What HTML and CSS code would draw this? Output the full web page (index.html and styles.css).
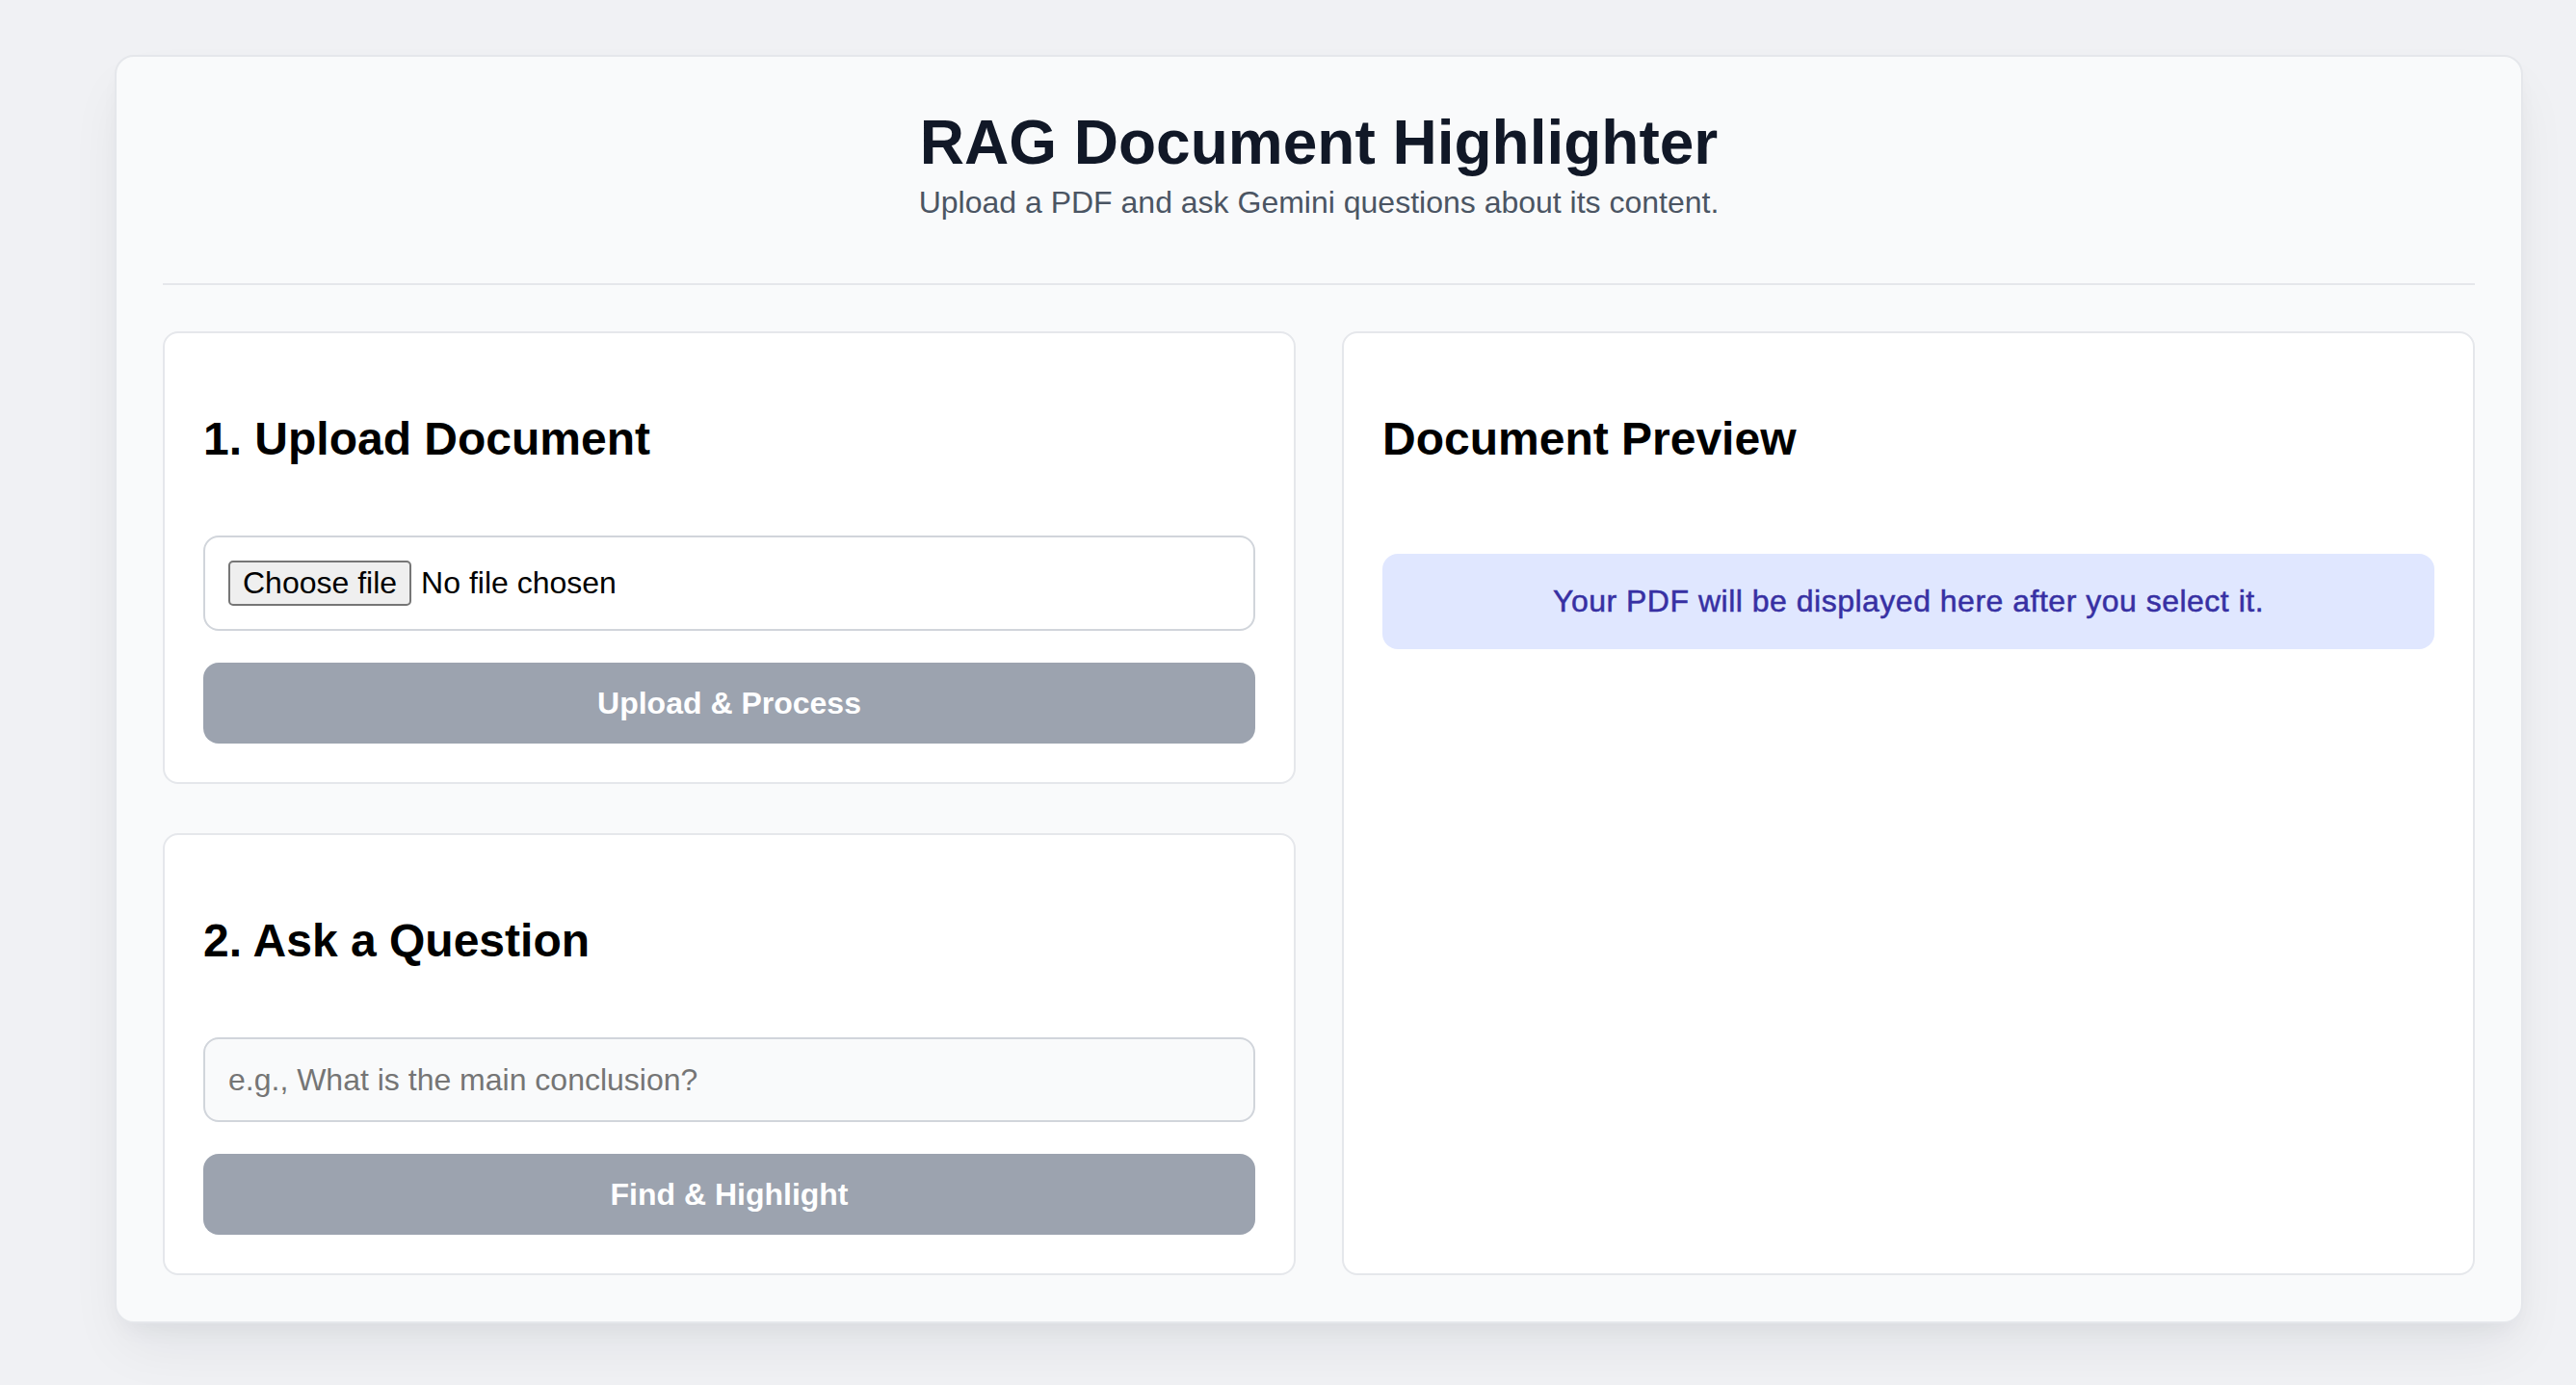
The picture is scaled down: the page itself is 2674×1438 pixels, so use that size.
FILE: index.html
```html
<!DOCTYPE html>
<html lang="en">
<head>
<meta charset="utf-8">
<title>RAG Document Highlighter</title>
<link rel="stylesheet" href="styles.css">
</head>
<body>
  <main class="app">
    <header class="app-header">
      <h1 class="app-title">RAG Document Highlighter</h1>
      <p class="app-subtitle">Upload a PDF and ask Gemini questions about its content.</p>
    </header>
    <div class="layout">
      <div class="left-col">
        <section class="card">
          <h2 class="card-title">1. Upload Document</h2>
          <label class="file-box">
            <span class="file-btn">Choose file</span>
            <span class="file-name">No file chosen</span>
          </label>
          <button class="action-btn" type="button">Upload &amp; Process</button>
        </section>
        <section class="card">
          <h2 class="card-title">2. Ask a Question</h2>
          <input class="question-input" type="text" placeholder="e.g., What is the main conclusion?">
          <button class="action-btn" type="button">Find &amp; Highlight</button>
        </section>
      </div>
      <section class="card preview-card">
        <h2 class="card-title preview-title">Document Preview</h2>
        <div class="preview-note">Your PDF will be displayed here after you select it.</div>
      </section>
    </div>
  </main>
</body>
</html>
```
FILE: styles.css
```css
* {
  box-sizing: border-box;
}

html, body {
  margin: 0;
  padding: 0;
}

body {
  background: #f0f1f4;
  font-family: "Liberation Sans", Arial, Helvetica, sans-serif;
  color: #000;
  min-height: 1438px;
}

.app {
  margin: 57px 55px 0 119px;
  background: #f9fafb;
  border: 2px solid #e5e7eb;
  border-radius: 20px;
  padding: 53px 48px 48px 48px;
  box-shadow: 0 30px 60px -10px rgba(17, 24, 39, 0.07), 0 12px 24px -8px rgba(17, 24, 39, 0.05);
}

.app-header {
  text-align: center;
  padding-bottom: 64px;
  border-bottom: 2px solid #e5e7eb;
  margin-bottom: 48px;
}

.app-title {
  margin: 0;
  font-size: 64px;
  line-height: 72px;
  font-weight: 700;
  color: #111827;
}

.app-subtitle {
  margin: 6px 0 0 0;
  font-size: 32px;
  line-height: 40px;
  color: #4b5563;
}

.layout {
  display: grid;
  grid-template-columns: 1fr 1fr;
  gap: 48px;
}

.left-col {
  display: flex;
  flex-direction: column;
  gap: 51px;
}

.card {
  background: #ffffff;
  border: 2px solid #e5e7eb;
  border-radius: 16px;
  padding: 40px;
  display: flex;
  flex-direction: column;
}

.card-title {
  margin: 42px 0 72px 0;
  font-size: 48px;
  line-height: 56px;
  font-weight: 700;
  color: #000;
}

.preview-title {
  margin-bottom: 91px;
}

.file-box {
  display: flex;
  align-items: center;
  border: 2px solid #d1d5db;
  border-radius: 16px;
  padding: 24px;
  background: #ffffff;
  font-size: 32px;
  line-height: 37px;
}

.file-btn {
  display: inline-block;
  background: #efefef;
  border: 2px solid #767676;
  border-radius: 5px;
  padding: 3px 13px;
  color: #000;
}

.file-name {
  margin-left: 10px;
  color: #000;
}

.question-input {
  display: block;
  width: 100%;
  border: 2px solid #d1d5db;
  border-radius: 16px;
  background: #f9fafb;
  padding: 24px;
  font-family: "Liberation Sans", Arial, Helvetica, sans-serif;
  font-size: 32px;
  line-height: 36px;
  height: 88px;
  color: #111827;
  outline: none;
}

.question-input::placeholder {
  color: #757575;
}

.action-btn {
  display: block;
  width: 100%;
  margin-top: 33px;
  background: #9ca3af;
  color: #ffffff;
  border: none;
  border-radius: 16px;
  padding: 24px;
  font-family: "Liberation Sans", Arial, Helvetica, sans-serif;
  font-size: 32px;
  line-height: 36px;
  font-weight: 700;
  cursor: not-allowed;
}

.preview-note {
  background: #e0e7ff;
  color: #3730a3;
  border-radius: 16px;
  padding: 30px 24px;
  font-size: 32px;
  line-height: 39px;
  font-weight: 500;
  letter-spacing: 0.5px;
  -webkit-text-stroke: 0.5px #3730a3;
  text-align: center;
}
```
